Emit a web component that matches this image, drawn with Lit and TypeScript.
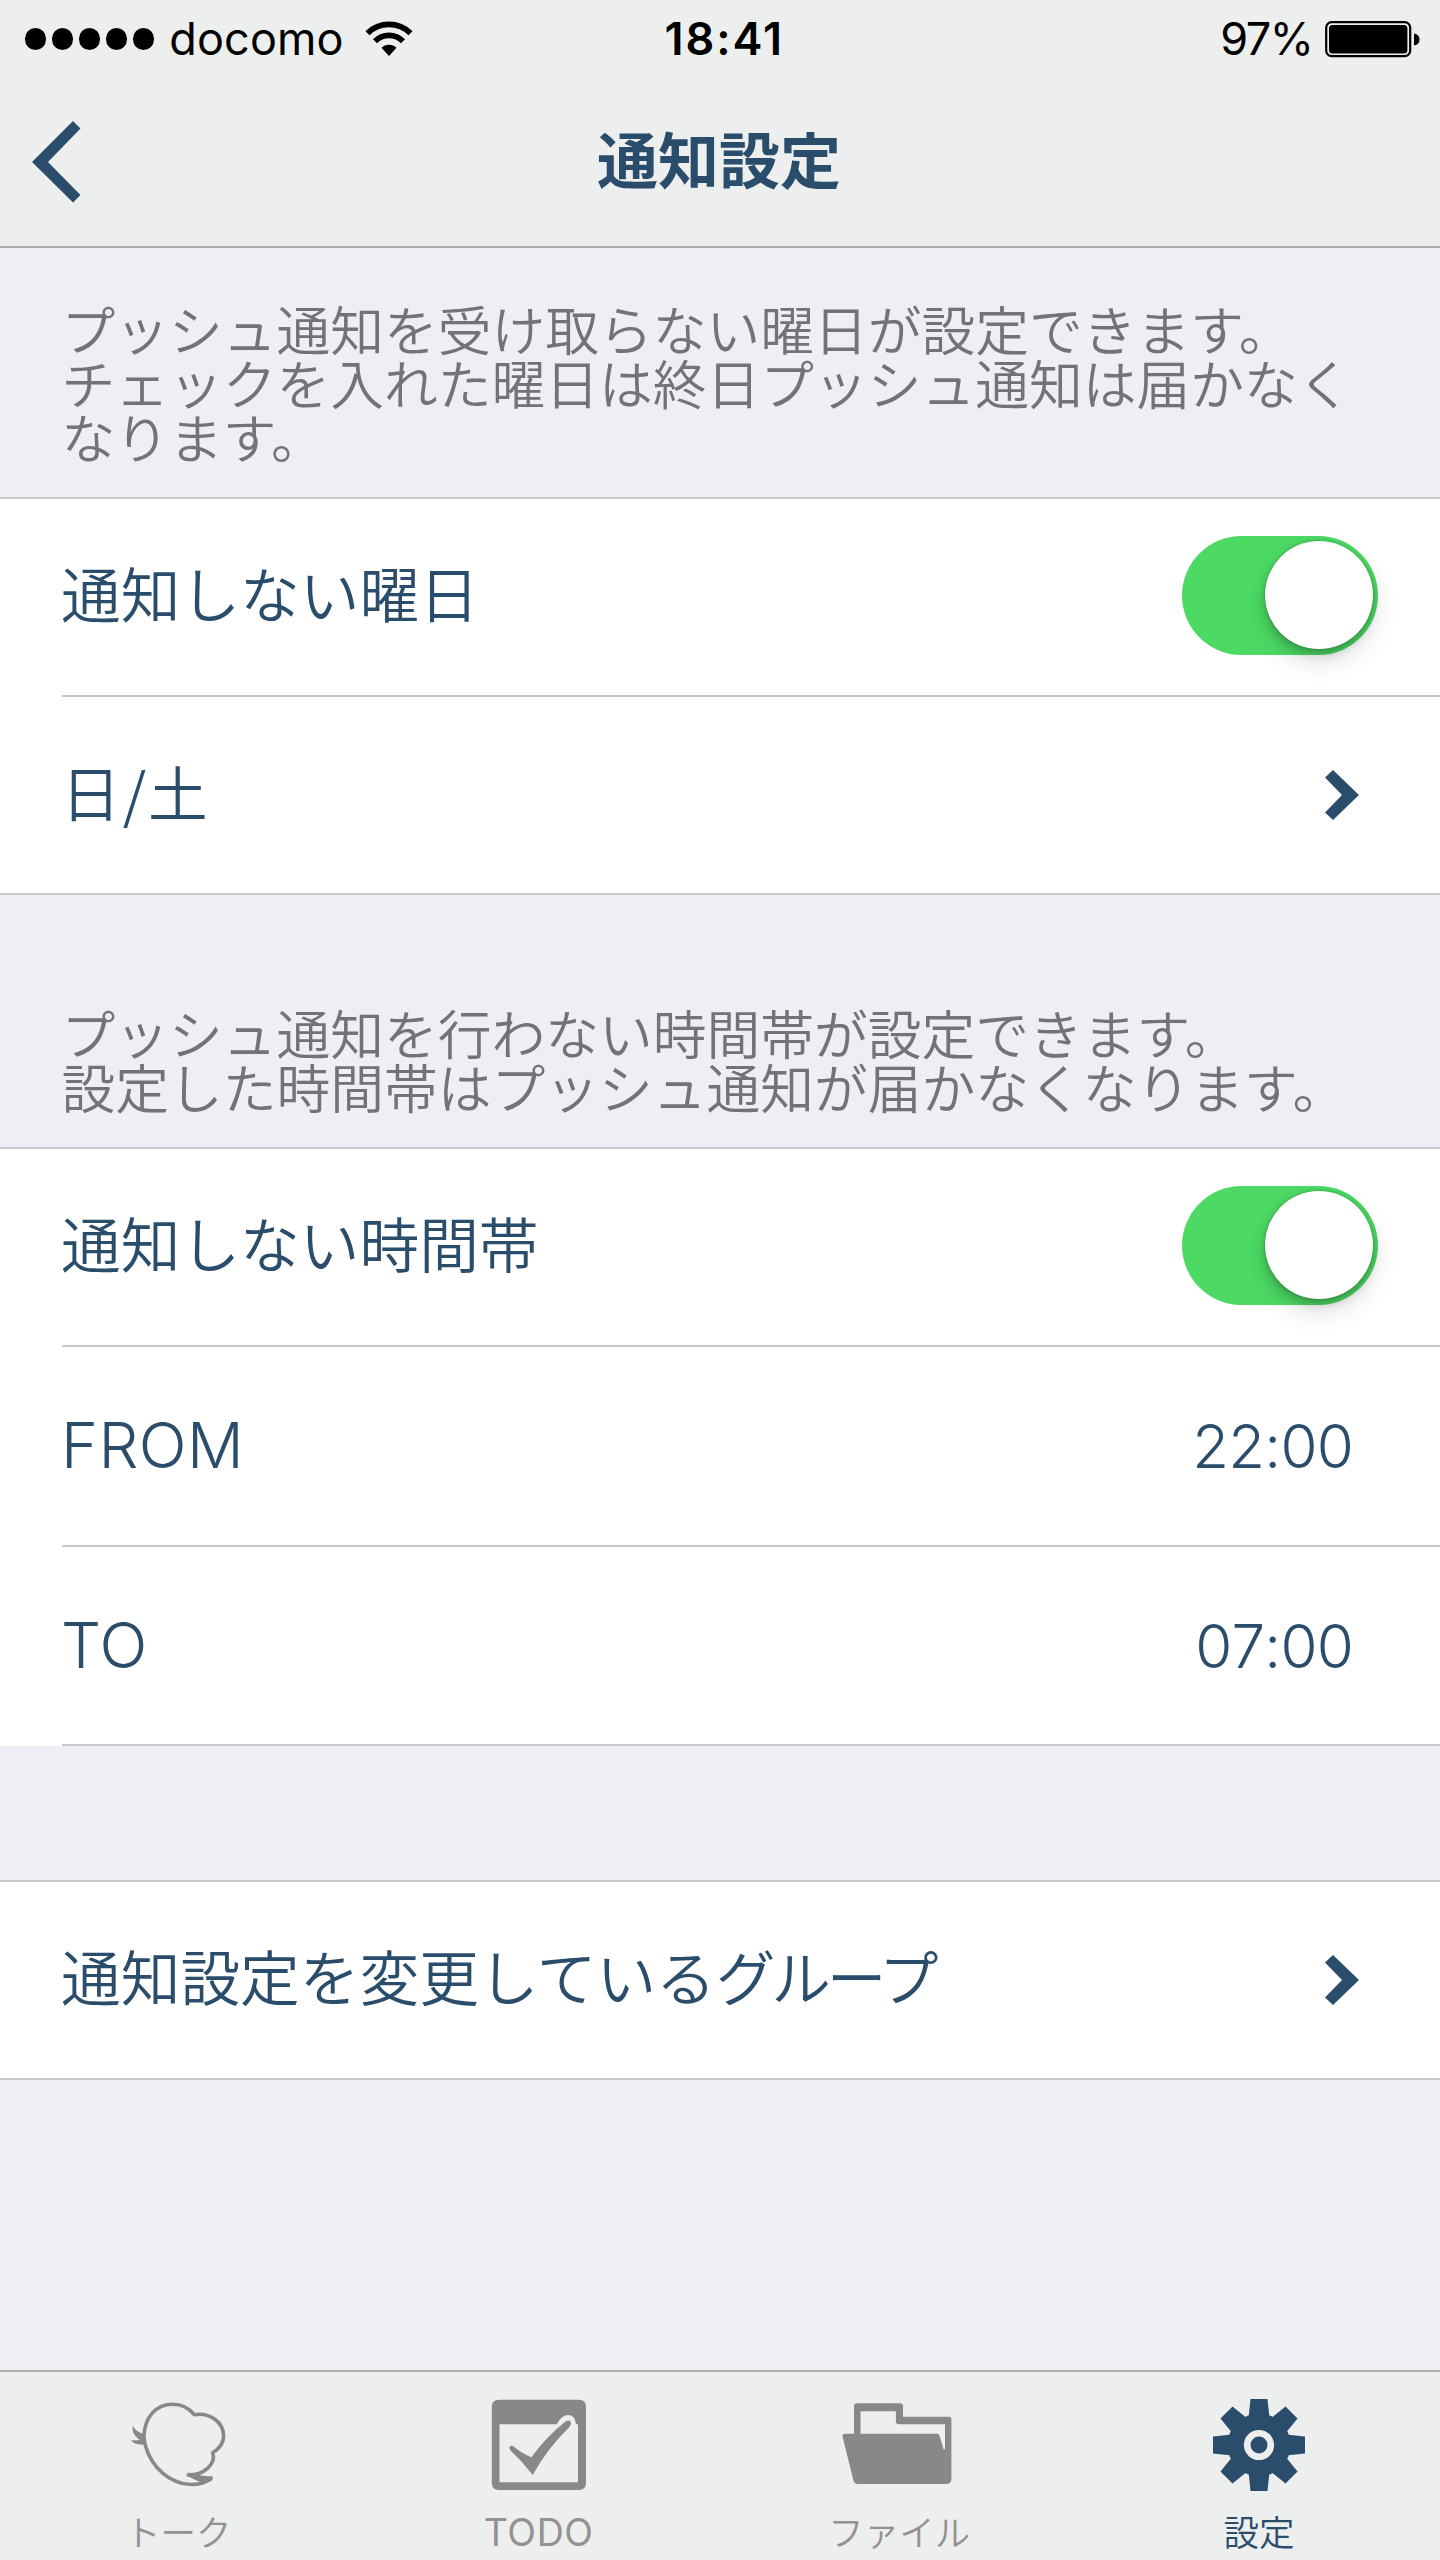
import { LitElement, html, css, svg, nothing } from "lit";
import { customElement, property } from "lit/decorators.js";
import { classMap } from "lit/directives/class-map.js";

@customElement("toggle-switch")
class ToggleSwitch extends LitElement {
  static styles = css`
    :host { display: block; }
    .track {
      box-sizing: border-box;
      width: 196px;
      height: 119px;
      padding: 5px 5.5px;
      border-radius: 60px;
      background: #4cda64;
      display: flex;
      justify-content: flex-end;
      align-items: center;
    }
    .knob {
      width: 108px;
      height: 108px;
      border-radius: 50%;
      background: #fff;
      box-shadow: 0 11px 26px rgba(0, 0, 0, 0.15), 0 5px 8px rgba(0, 0, 0, 0.18), 0 0 3px rgba(0, 0, 0, 0.25);
    }
  `;
  render() {
    return html`<div class="track"><div class="knob"></div></div>`;
  }
}

@customElement("setting-row")
class SettingRow extends LitElement {
  @property() label = "";
  @property() tail = "";
  @property() value = "";
  @property() kind = "";
  @property() face = "";

  static styles = css`
    :host { display: block; }
    .row {
      height: 196px;
      padding: 0 62px 0 61px;
      display: flex;
      align-items: center;
      justify-content: space-between;
      color: #2b4d6c;
    }
    .tall { height: 197.500px; }
    .label {
      font: 350 59.7px/60px "Noto Sans CJK JP", sans-serif;
      padding-bottom: 10px;
      white-space: nowrap;
    }
    .days { letter-spacing: 2px; padding-bottom: 8px; }
    .tail { letter-spacing: -4.2px; }
    .latin { font: 300 63px/64px Inter, sans-serif; padding: 0 0 1px; letter-spacing: 0.4px; }
    .value { font: 300 60px/64px Inter, sans-serif; padding: 1px 25px 0 0; letter-spacing: -0.8px; font-kerning: none; }
    .chevron { display: block; margin-right: 19px; }
    .toggle { padding-bottom: 4px; }
  `;
  render() {
    const tall = this.face === "latin";
    return html`<div class=${classMap({ row: true, tall })}>
      <span class=${classMap({ label: true, days: this.face === "days", latin: this.face === "latin" })}
        >${this.label}${this.tail ? html`<span class="tail">${this.tail}</span>` : nothing}</span
      >
      ${this.kind === "toggle" ? html`<toggle-switch class="toggle"></toggle-switch>` : nothing}
      ${this.kind === "link"
        ? html`<svg class="chevron" width="34" height="50" viewBox="0 0 34 50">
            <path d="M8 0L34 25L8 50L0 42.5L17 25L0 7.5Z" fill="#2b4d6c" />
          </svg>`
        : nothing}
      ${this.value ? html`<span class="value">${this.value}</span>` : nothing}
    </div>`;
  }
}

const GEAR_TEETH = [0, 45, 90, 135, 180, 225, 270, 315];

const talkIcon = svg`<svg width="110" height="96" viewBox="0 0 110 96">
  <path d="M19 38C20 20 31 7.300 47.600 7.300C57 7.300 64 11 69.200 17.700C86 15 98.600 26 98.600 39C98.600 46 94 52 87.600 55.700C91.500 67 79 78 63.200 78C70 79 73 84 86 81.500C80 86 72 88 64 87.300C46 86 27 72 20.500 49C19.500 45 18.700 41 19 38Z"
    fill="none" stroke="#888" stroke-width="3.600" stroke-linejoin="round" />
  <path d="M8 28.500C9 32 14 36 19 37L21 47C15 48.500 9 47 6 43.500C9 43 12 43.500 15 43C9 39 6.500 34 8 28.500Z" fill="#888" />
  <path d="M63 75.500C71 77 77 80 87.500 79L87 83.500C78 88 72 84 63 79Z" fill="#888" />
</svg>`;

const todoIcon = svg`<svg width="96" height="92" viewBox="0 0 96 92">
  <path fill-rule="evenodd" fill="#888"
    d="M8 .7H88Q95 .7 95 8V84Q95 91 88 91H8Q.8 91 .8 84V8Q.8 .7 8 .7ZM8.500 25.300V83.300H87V25.300H85Q84 16 77 16Q71 16 65.600 25.300Z" />
  <path fill="#888" d="M22 47Q30 54 40.300 58.300Q55 38 74.500 22.500Q79 20 80 24Q80 27 77 29.500Q56 50 41.700 76Q31 62 19 51Q17 46 22 47Z" />
</svg>`;

const folderIcon = svg`<svg width="118" height="92" viewBox="0 0 118 92">
  <path fill-rule="evenodd" fill="#888"
    d="M17 4.300H60Q63 4.300 63 7.300V17.700H108.500Q111.400 17.700 111.400 20.700V80Q111.400 85 106 85H18Q14 85 13.300 81L2.600 38Q2 34.700 5 34.700H14V7.300Q14 4.300 17 4.300ZM20.500 12.300V34.700H97Q99 34.700 99.500 36.500L103.600 50.500L105 50V25.300H58.500Q55.900 25.300 55.900 22.500V12.300Z" />
</svg>`;

const gearIcon = svg`<svg width="94" height="94" viewBox="-47 -47 94 94">
  <circle r="31.500" fill="#2b4d6c" />
  ${GEAR_TEETH.map((a) => svg`<path d="M-8.500 -46H8.500L10.500 -27H-10.500Z" fill="#2b4d6c" transform="rotate(${a})" />`)}
  <circle r="11.800" fill="none" stroke="#edefee" stroke-width="6.600" />
</svg>`;

const TABS = [
  { name: "トーク", icon: talkIcon, key: "talk" },
  { name: "TODO", icon: todoIcon, key: "todo" },
  { name: "ファイル", icon: folderIcon, key: "file" },
  { name: "設定", icon: gearIcon, key: "active" },
];

@customElement("app-root")
class AppRoot extends LitElement {
  static styles = css`
    :host {
      display: flex;
      flex-direction: column;
      width: 1440px;
      height: 2560px;
      overflow: hidden;
      background: #efeef4;
      font-family: "Noto Sans CJK JP", sans-serif;
    }
    .header {
      box-sizing: border-box;
      height: 248px;
      background: #edefee;
      border-bottom: 2px solid #a9a9ad;
    }
    .status {
      height: 78px;
      padding: 0 20.5px 0 25px;
      display: grid;
      grid-template-columns: 1fr auto 1fr;
      align-items: center;
      color: #000;
      font: 400 45px/54px Inter, sans-serif;
    }
    .carrier { display: flex; align-items: center; }
    .dots { display: flex; gap: 5.600px; margin-right: 15.5px; }
    .dot { width: 21.300px; height: 21.300px; border-radius: 50%; background: #000; }
    .network { width: 172px; margin-right: 24px; letter-spacing: 0.1px; }
    .clock { font-weight: 600; letter-spacing: 1.9px; padding-left: 4px; }
    .power { display: flex; align-items: center; justify-content: flex-end; gap: 12px; }
    .percent { letter-spacing: -1.5px; }
    .nav {
      height: 168px;
      padding: 0 34px 0 32px;
      display: grid;
      grid-template-columns: 50px 1fr 50px;
      align-items: center;
    }
    .title {
      margin: 0;
      text-align: center;
      color: #2b4d6c;
      font: 700 61px/62px "Noto Sans CJK JP", sans-serif;
      padding-bottom: 8px;
    }
    .note {
      box-sizing: border-box;
      margin: 0;
      padding: 0 0 28px 61.5px;
      color: #727277;
      font: 350 53.760px/54px "Noto Sans CJK JP", sans-serif;
      white-space: pre;
      display: flex;
      flex-direction: column;
      justify-content: flex-end;
    }
    .first { height: 249px; padding-bottom: 34px; }
    .second { height: 252px; padding-bottom: 34.500px; }
    .group { background: #fff; border-top: 2px solid #c8c7cc; border-bottom: 2px solid #c8c7cc; }
    .open { border-bottom: 0; }
    .line { height: 2px; margin-left: 62px; background: #c8c7cc; }
    .gap { height: 134px; }
    .fill { flex: 1; }
    .tabs {
      box-sizing: border-box;
      height: 190px;
      padding-right: 1px;
      background: #edefee;
      border-top: 2px solid #adaeb0;
      display: grid;
      grid-template-columns: repeat(4, 1fr);
    }
    .tab {
      height: 188px;
      display: flex;
      flex-direction: column;
      align-items: center;
      color: #929292;
      font: 350 35.500px/42px "Noto Sans CJK JP", sans-serif;
    }
    .picture { height: 138px; display: flex; align-items: center; padding-top: 8px; box-sizing: border-box; }
    .talk .name { padding-right: 3px; }
    .todo { padding-right: 2px; }
    .todo .name { font: 400 37.500px/44px Inter, sans-serif; padding-top: 1px; letter-spacing: 0.6px; }
    .active { color: #2b4d6c; }
  `;

  render() {
    return html`
      <header class="header">
        <div class="status">
          <div class="carrier">
            <div class="dots">${[1, 2, 3, 4, 5].map(() => html`<i class="dot"></i>`)}</div>
            <span class="network">docomo</span>
            <svg width="48" height="36" viewBox="0 0 48 36">
              <g fill="none" stroke="#000" stroke-width="5.800">
                <path d="M2.500 12.200A30.500 30.500 0 0 1 45.500 12.200" />
                <path d="M10 20.300A19.500 19.500 0 0 1 38 20.300" />
              </g>
              <path d="M16.500 26.800A10.500 10.500 0 0 1 31.500 26.800L24 35Z" fill="#000" />
            </svg>
          </div>
          <span class="clock">18:41</span>
          <div class="power">
            <span class="percent">97%</span>
            <svg width="95" height="37" viewBox="0 0 95 37">
              <rect x="1.200" y="1.200" width="84" height="34" rx="5.500" fill="none" stroke="#000" stroke-width="2.200" />
              <rect x="4" y="4" width="78.400" height="28.400" rx="3.500" fill="#000" />
              <path d="M89 12.500Q94.500 13.500 94.500 18.500T89 24.500Z" fill="#000" />
            </svg>
          </div>
        </div>
        <div class="nav">
          <svg width="50" height="82" viewBox="0 0 50 82">
            <path d="M41 0L48.500 7.500L16 41L48.500 74L41 81.500L0 41Z" fill="#2b4d6c" />
          </svg>
          <h1 class="title">通知設定</h1>
        </div>
      </header>

      <p class="note first"><span>プッシュ通知を受け取らない曜日が設定できます。</span><span>チェックを入れた曜日は終日プッシュ通知は届かなく</span><span>なります。</span></p>
      <section class="group">
        <setting-row label="通知しない曜日" kind="toggle"></setting-row>
        <div class="line"></div>
        <setting-row label="日/土" face="days" kind="link"></setting-row>
      </section>

      <p class="note second"><span>プッシュ通知を行わない時間帯が設定できます。</span><span>設定した時間帯はプッシュ通知が届かなくなります。</span></p>
      <section class="group open">
        <setting-row label="通知しない時間帯" kind="toggle"></setting-row>
        <div class="line"></div>
        <setting-row label="FROM" value="22:00" face="latin"></setting-row>
        <div class="line"></div>
        <setting-row label="TO" value="07:00" face="latin"></setting-row>
        <div class="line"></div>
      </section>

      <div class="gap"></div>
      <section class="group">
        <setting-row label="通知設定を変更している" tail="グループ" kind="link"></setting-row>
      </section>
      <div class="fill"></div>

      <nav class="tabs">
        ${TABS.map(
          (t) => html`<div class="tab ${t.key}">
            <div class="picture">${t.icon}</div>
            <span class="name">${t.name}</span>
          </div>`
        )}
      </nav>
    `;
  }
}
